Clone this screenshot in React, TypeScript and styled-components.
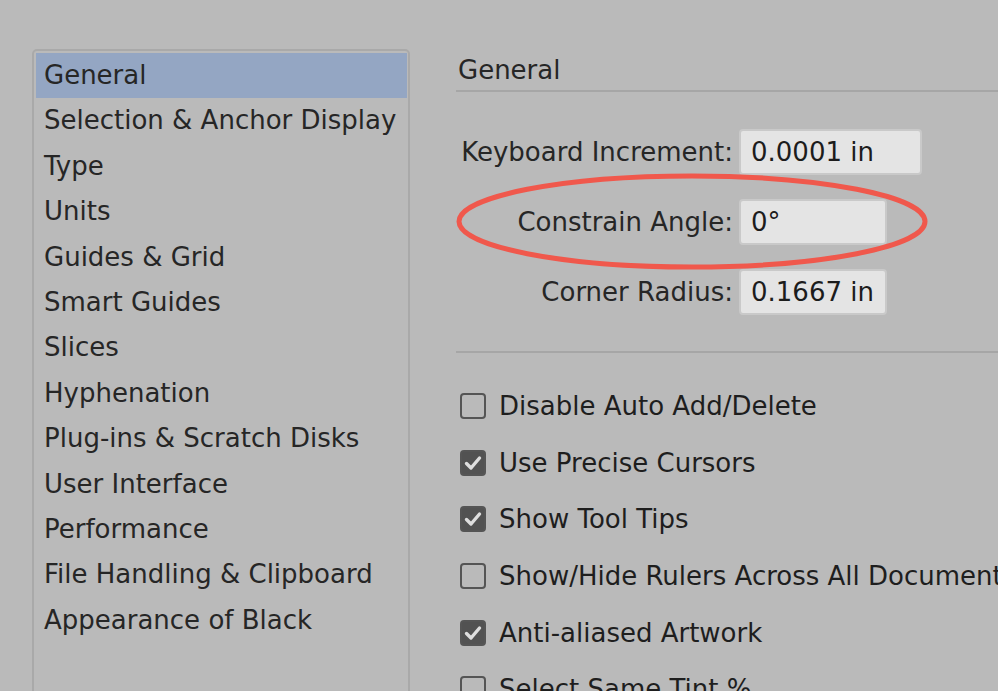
import styled, { createGlobalStyle } from "styled-components";

const GlobalStyle = createGlobalStyle`
  html, body {
    margin: 0;
    padding: 0;
    background: #bababa;
    overflow: hidden;
  }
  * {
    box-sizing: border-box;
  }
`;

const Window = styled.div`
  position: relative;
  width: 998px;
  height: 691px;
  overflow: hidden;
  display: flex;
  align-items: flex-start;
  gap: 48px;
  padding-left: 32px;
  background: #bababa;
  font-family: "DejaVu Sans", "Liberation Sans", sans-serif;
  font-size: 26px;
  color: #262626;
`;

const CategoryList = styled.ul`
  list-style: none;
  margin: 49px 0 0;
  padding: 2px 1px 2px 2px;
  width: 378px;
  height: 700px;
  border: 2px solid #a9a9a9;
  border-radius: 5px;
  flex-shrink: 0;
`;

const Category = styled.li<{ $selected?: boolean }>`
  height: 45.4px;
  line-height: 45.4px;
  padding-left: 8px;
  white-space: nowrap;
  background: ${(p) => (p.$selected ? "#94a6c3" : "transparent")};
`;

const Panel = styled.div`
  flex: 1;
  min-width: 0;
  padding-top: 55px;
`;

const Heading = styled.div`
  height: 37px;
  line-height: 30px;
  padding-left: 2px;
  border-bottom: 2px solid #a6a6a6;
  margin-left: -2px;
`;

const FieldGrid = styled.div`
  display: grid;
  grid-template-columns: 275px auto;
  column-gap: 6px;
  row-gap: 24px;
  align-items: center;
  justify-items: start;
  margin-top: 37px;
`;

const FieldLabel = styled.label`
  justify-self: end;
  white-space: nowrap;
`;

const ValueBox = styled.div<{ $width: number }>`
  width: ${(p) => p.$width}px;
  height: 46px;
  line-height: 42px;
  padding-left: 10px;
  background: #e4e4e4;
  border: 2px solid #c9c9c9;
  border-radius: 4px;
  color: #1c1c1c;
`;

const Divider = styled.div`
  height: 2px;
  background: #a6a6a6;
  margin: 36px 0 0 -2px;
`;

const CheckList = styled.div`
  margin-top: 25px;
  display: flex;
  flex-direction: column;
`;

const CheckRow = styled.div`
  height: 56.6px;
  display: flex;
  align-items: center;
  gap: 13px;
  white-space: nowrap;
  color: #1e1e1e;
`;

const Box = styled.span<{ $checked?: boolean }>`
  width: 26px;
  height: 26px;
  flex-shrink: 0;
  margin-left: 2px;
  border-radius: 4px;
  border: 2px solid #555555;
  background: ${(p) => (p.$checked ? "#525252" : "transparent")};
  display: flex;
  align-items: center;
  justify-content: center;
`;

const Annotation = styled.svg`
  position: absolute;
  left: 456px;
  top: 173px;
  pointer-events: none;
`;

const categories = [
  "General",
  "Selection & Anchor Display",
  "Type",
  "Units",
  "Guides & Grid",
  "Smart Guides",
  "Slices",
  "Hyphenation",
  "Plug-ins & Scratch Disks",
  "User Interface",
  "Performance",
  "File Handling & Clipboard",
  "Appearance of Black",
];

const fields = [
  { label: "Keyboard Increment:", value: "0.0001 in", width: 183 },
  { label: "Constrain Angle:", value: "0°", width: 148 },
  { label: "Corner Radius:", value: "0.1667 in", width: 148 },
];

const options = [
  { label: "Disable Auto Add/Delete", checked: false },
  { label: "Use Precise Cursors", checked: true },
  { label: "Show Tool Tips", checked: true },
  { label: "Show/Hide Rulers Across All Documents", checked: false },
  { label: "Anti-aliased Artwork", checked: true },
  { label: "Select Same Tint %", checked: false },
];

const Check = ({ checked }: { checked: boolean }) => (
  <Box $checked={checked}>
    {checked && (
      <svg width="20" height="20" viewBox="0 0 20 20">
        <path
          d="M3.5 10.5 L8 15 L16.5 5"
          fill="none"
          stroke="#dedede"
          strokeWidth="3.4"
          strokeLinecap="round"
          strokeLinejoin="round"
        />
      </svg>
    )}
  </Box>
);

export default function App() {
  return (
    <>
      <GlobalStyle />
      <Window>
        <CategoryList>
          {categories.map((c, i) => (
            <Category key={c} $selected={i === 0}>
              {c}
            </Category>
          ))}
        </CategoryList>
        <Panel>
          <Heading>General</Heading>
          <FieldGrid>
            {fields.map((f) => [
              <FieldLabel key={f.label}>{f.label}</FieldLabel>,
              <ValueBox key={f.value} $width={f.width}>
                {f.value}
              </ValueBox>,
            ])}
          </FieldGrid>
          <Divider />
          <CheckList>
            {options.map((o) => (
              <CheckRow key={o.label}>
                <Check checked={o.checked} />
                {o.label}
              </CheckRow>
            ))}
          </CheckList>
        </Panel>
        <Annotation width="472" height="97" viewBox="0 0 472 97">
          <ellipse
            cx="236"
            cy="48.5"
            rx="233"
            ry="45.5"
            fill="none"
            stroke="#f0584c"
            strokeWidth="5"
          />
        </Annotation>
      </Window>
    </>
  );
}
